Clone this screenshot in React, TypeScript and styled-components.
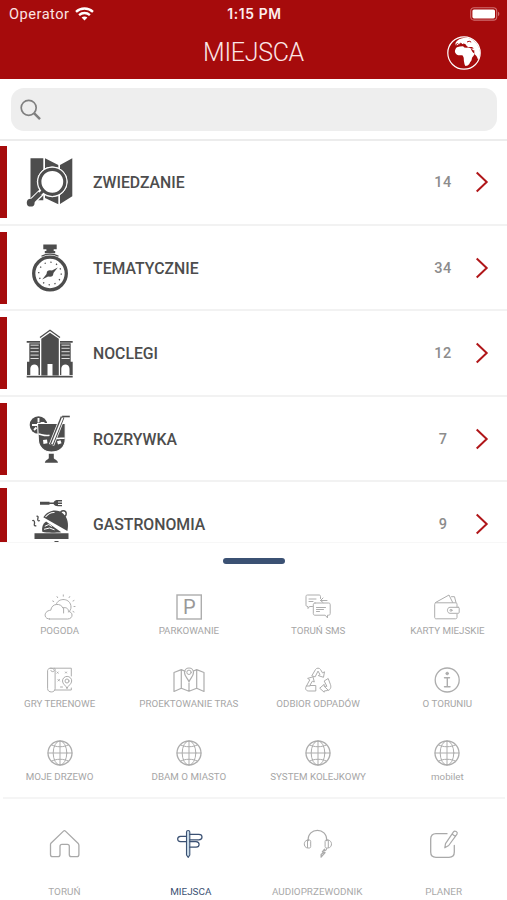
import React from "react";
import styled, { createGlobalStyle } from "styled-components";

const RED = "#a60b0c";
const DARK = "#4d4d4d";
const NAVY = "#3b5173";

const GlobalStyle = createGlobalStyle`
  *, *::before, *::after { box-sizing: border-box; }
  body { margin: 0; background: #fff; font-family: Roboto, "Liberation Sans", sans-serif; }
  svg { display: block; flex: none; }
`;

const Screen = styled.main`
  width: 507px;
  height: 900px;
  display: flex;
  flex-direction: column;
  overflow: hidden;
  background: #fff;
`;

const Header = styled.header`
  height: 79px;
  flex: none;
  background: ${RED};
  color: #fff;
`;

const StatusBar = styled.div`
  height: 27px;
  padding: 0 7px 0 9px;
  display: grid;
  grid-template-columns: 1fr auto 1fr;
  align-items: center;
`;

const Carrier = styled.div`
  display: flex;
  align-items: center;
  gap: 6px;
  padding-top: 1px;
  font-size: 14.6px;
  line-height: 26px;
  letter-spacing: 0.5px;
  color: #fbe3e3;
`;

const Clock = styled.div`
  padding-top: 1px;
  font-family: Inter, Roboto, sans-serif;
  font-weight: 600;
  font-size: 13.8px;
  line-height: 26px;
  letter-spacing: 0.65px;
  color: #fdeeee;
`;

const BatterySlot = styled.div`
  display: flex;
  justify-content: flex-end;
`;

const TitleBar = styled.div`
  height: 52px;
  padding: 0 26px 0 60px;
  display: grid;
  grid-template-columns: 1fr 34px;
  align-items: center;
`;

const Title = styled.h1`
  margin: 0;
  text-align: center;
  font-size: 25px;
  line-height: 50px;
  font-weight: 300;
  letter-spacing: -0.3px;
  color: #fbe6e6;
`;

const SearchArea = styled.div`
  height: 62px;
  flex: none;
  padding: 9px 10px 0 11px;
  border-bottom: 2px solid #ececec;
`;

const SearchField = styled.div`
  height: 43px;
  padding-left: 9px;
  border-radius: 13px;
  background: #eeeeee;
  display: flex;
  align-items: center;
`;

const List = styled.ul`
  height: 401px;
  flex: none;
  margin: 0;
  padding: 0;
  overflow: hidden;
  list-style: none;
`;

const Row = styled.li`
  height: 85.5px;
  padding: 1px 18px 0 0;
  border-bottom: 2px solid #f2f2f2;
  display: flex;
  align-items: center;

  &:first-child {
    height: 84.5px;
    padding-top: 0;
  }
`;

const Accent = styled.span`
  width: 7px;
  height: 72px;
  margin-right: 17px;
  background: ${RED};
`;

const RowLabel = styled.span`
  flex: 1;
  margin-left: 17px;
  padding-top: 1px;
  font-size: 15.8px;
  font-weight: 500;
  color: ${DARK};
`;

const Count = styled.span`
  width: 60px;
  margin-right: 2px;
  padding-top: 1px;
  text-align: center;
  font-size: 14.5px;
  font-weight: 500;
  letter-spacing: 0.4px;
  color: #8c8c8c;
`;

const Drawer = styled.section`
  height: 255px;
  flex: none;
  padding-top: 15px;
  border-top: 1px solid #f7f7f7;
`;

const Handle = styled.div`
  width: 62px;
  height: 5.5px;
  margin: 0 auto 27px;
  border-radius: 3px;
  background: ${NAVY};
`;

const Grid = styled.div`
  margin: 0 -5px;
  display: grid;
  grid-template-columns: repeat(4, 1fr);
  grid-auto-rows: 73.3px;
`;

const Tile = styled.div`
  display: flex;
  flex-direction: column;
  align-items: center;
  color: #adadad;
`;

const TileLabel = styled.span`
  margin-top: 1px;
  font-size: 9.75px;
  line-height: 14px;
  white-space: nowrap;
  color: #a6a6a6;
`;

const TabBar = styled.nav`
  flex: 1;
  margin: 0 2px 0 3px;
  border-top: 2px solid #f5f5f5;
  display: grid;
  grid-template-columns: repeat(4, 126.4px);
  justify-content: center;
`;

const Tab = styled.div<{ $active?: boolean }>`
  padding-top: 29px;
  display: flex;
  flex-direction: column;
  align-items: center;
  color: ${(p) => (p.$active ? NAVY : "#a9a9a9")};
`;

const TabLabel = styled.span`
  margin-top: 25px;
  font-size: 9.9px;
  line-height: 14px;
  white-space: nowrap;
`;

const LineSvg = ({ children }: { children: React.ReactNode }) => (
  <svg width="40" height="32" viewBox="0 0 40 32" fill="none" stroke="currentColor" strokeWidth="1" strokeLinejoin="round" strokeLinecap="round">
    {children}
  </svg>
);

const SolidSvg = ({ children }: { children: React.ReactNode }) => (
  <svg width="52" height="52" viewBox="0 0 52 52" fill={DARK}>
    {children}
  </svg>
);

const Wifi = () => (
  <svg width="19" height="14" viewBox="0 0 19 14" fill="none" stroke="#fff" strokeWidth="2.4">
    <path d="M1 4.8C5.8.4 13.2.4 18 4.8" />
    <path d="M4.1 8.1c3.1-2.8 7.7-2.8 10.8 0" />
    <path d="M9.5 13.6 6.6 10.6c1.7-1.5 4.1-1.5 5.8 0z" fill="#fff" stroke="none" />
  </svg>
);

const Battery = () => (
  <svg width="30" height="14" viewBox="0 0 30 14">
    <rect x=".7" y=".7" width="26" height="12.4" rx="3.4" fill="none" stroke="#d06f70" strokeWidth="1.1" />
    <rect x="2.4" y="2.4" width="22.6" height="9" rx="1.6" fill="#fff" />
    <path d="M28 4.8c1.8.5 1.8 3.7 0 4.2z" fill="#d06f70" />
  </svg>
);

const Earth = () => (
  <svg width="34" height="34" viewBox="0 0 34 34">
    <circle cx="17" cy="17" r="16.2" fill="none" stroke="#fff" strokeWidth="1.2" />
    <path
      fill="#fff"
      d="M8.5 9.2C8 7 9 5.500 10.500 4.400 14 1.600 20.500 .6 25 3.400c4.500 2.700 8 8 8 13.200 0 3.100-.6 5.200-1.700 7.200-.7-.8-.9-2.200-1.600-3.300-.6-1.200-1.500-1.300-2-2.400l-.9-3.500c-.8-1-2.400-.9-3.200-2l1.500-.2 1.300.4c.4-1.500-1.400-2-3.200-1.900l-2.200.2-1.700-1.500-1-1.700-2.300.3-2.600-.6-1.600 1.300z"
    />
    <path
      fill="#fff"
      d="M10 11.300c2-.6 4-1.100 6.100-1l1.200 1.100 2 .3 1.900-.3 2.800.8 1 2.500c.6 1.200 1.200 2.300 2.500 2.500.6.8-1 2.700-2.200 4.100-.7 1.300-.3 2.300-1 3.400-.9.8-1.600 1.900-2 3.200-1 1.300-2.100 2-3.900 2-1.100-1.600-1.100-3.200-1.500-4.900l-.2-3.300-1-2.200c-1.700-.5-4 .2-5.700-.7-1.100-1-1.900-1.900-2.100-3.200.1-1.700.7-3.300 2.100-4.300z"
    />
    <path d="m8.500 8.900 2-1.300 1.400 1 1.900-1.400 1.800 1.600 1.500-1 1.200 2.200M20 6l2.200-.8 2 .9" fill="none" stroke={RED} strokeWidth="1" />
    <path d="m24 12.300 1.700 3.200 1.900-.5" fill="none" stroke={RED} strokeWidth=".8" />
  </svg>
);

const SearchIcon = () => (
  <svg width="22" height="22" viewBox="0 0 22 22" fill="none" stroke="#808080">
    <circle cx="8.700" cy="8.800" r="7.500" strokeWidth="1.700" />
    <path d="m14 14.200 6 6" strokeWidth="2.400" />
  </svg>
);

const Chevron = () => (
  <svg width="14" height="22" viewBox="0 0 14 22" fill="none" stroke="#b01619" strokeWidth="2">
    <path d="m1.700 1.500 10 9.500-10 9.500" />
  </svg>
);

const SightseeingIcon = () => (
  <SolidSvg>
    <path d="M6.500 2.300h12.800v42H6.500zM21 2.300 34.300 9v39.300L21 42zM36 9l12.300-6.700v38L36 48z" />
    <path d="M19.500 34.500 6.700 46.700" stroke="#fff" strokeWidth="7" strokeLinecap="round" />
    <circle cx="28.300" cy="25.800" r="15" fill="#fff" stroke="#fff" strokeWidth="1" />
    <circle cx="28.300" cy="25.800" r="12.500" fill="#fff" stroke={DARK} strokeWidth="3.200" />
    <path d="m20 34-4 4" stroke={DARK} strokeWidth="3" />
    <path d="M16 37.500 6.700 46.700" stroke={DARK} strokeWidth="4.600" />
    <circle cx="6.700" cy="46.700" r="3.900" />
  </SolidSvg>
);

const StopwatchIcon = () => (
  <SolidSvg>
    <path d="M19.300 2.600h13.400v4.700h-3v1.800h1.500v2.200H20.800V9.100h1.600V7.300h-3.100z" />
    <path d="M17.500 14.200c5-2.700 12-2.700 17 0" fill="none" stroke={DARK} strokeWidth="1.300" />
    <circle cx="26" cy="31.500" r="16.300" fill="#fff" stroke={DARK} strokeWidth="3.300" />
    <circle cx="26" cy="31.500" r="11.300" fill="none" stroke={DARK} strokeWidth="1.300" strokeDasharray="1.300 4.617" />
    <circle cx="26" cy="31.500" r="3.300" />
    <path d="m27 29 6.800-3.500-4.800 6zM25 34l-6.800 3.500 4.800-6z" />
  </SolidSvg>
);

const HotelIcon = () => (
  <SolidSvg>
    <path d="M16 10.600 26 3.200l10 7.400" fill="none" stroke={DARK} strokeWidth="1.300" />
    <path d="M17.300 11.800 26 5.800l8.800 6v36.800h-6.300V37h-5v11.600h-6.200z" />
    <path d="M2.700 14H16v1.700H2.700zM36 14h12.700v1.700H36zM2.700 48.700h46v1.700h-46z" />
    <path d="M5.300 16.300H16v31.500H5.300zM36 16.300h10.700v31.500H36z" />
    <path d="M6.500 18.200h8.200M6.500 21.300h8.200M6.500 24.700h8.200M6.500 28.100h8.200M6.500 31.500h8.200M37.500 18.200h8.200M37.500 21.300h8.200M37.500 24.700h8.200M37.500 28.100h8.200M37.500 31.500h8.200" stroke="#ddd" strokeWidth="1" />
    <path d="M3 48V34.800h13V48M36 48V34.800h12.700V48" />
    <path d="M6.300 48.200v-6.500c0-5.700 8.200-5.700 8.200 0v6.500zM37.300 48.200v-6.500c0-5.700 8.200-5.700 8.200 0v6.500z" fill="#fff" />
    <path d="M16.500 12v36.200M35.500 12v36.200" stroke="#fff" strokeWidth=".9" />
  </SolidSvg>
);

const DrinkIcon = () => (
  <SolidSvg>
    <circle cx="14.500" cy="12" r="8.800" />
    <path d="M14.500 5v4.500M8 12h5M10 17l2.500-2.500M16.500 10h4" stroke="#fff" strokeWidth="1.900" />
    <path d="M13.500 10.500h27.700v16.200c0 7.200-5.700 12.300-13.800 12.300-7.200 0-13-5-13-12.300z" stroke="#fff" strokeWidth="1.100" />
    <path d="M14.500 20.900c4 .8 6.500 2.500 11 1.300M29.500 24.500c4 1.900 7 .4 11.200.7" stroke="#fff" strokeWidth="1.500" fill="none" />
    <path d="m19 27 4-.5.500 3.800-4 .6zM33 28.200l3.500-1 1 3-3.500 1.200z" fill="#fff" />
    <path d="M38.600 4 27.500 32" stroke="#fff" strokeWidth="5.400" />
    <path d="M38.600 4 27.500 32" stroke={DARK} strokeWidth="3.800" />
    <path d="M38.700 4.500 27.900 31.300" stroke="#fff" strokeWidth="1.600" />
    <path d="M45.800 3.500h-7.700" stroke={DARK} strokeWidth="1.600" />
    <path d="M24.800 40.800h5v4.400c1 1.400 3.700 1.800 4.200 4.500H20.800c.5-2.700 3-3.100 4-4.500z" />
  </SolidSvg>
);

const FoodIcon = () => (
  <SolidSvg>
    <path d="M16 3.700h9.500v.8h4c1-1.900 2.400-2.400 4.400-2.400H38v1.300h-4v1h4v1.500h-4v1h4v1.300h-4.100c-2 0-3.400-.4-4.400-2.200h-4v.8H16z" />
    <circle cx="39.300" cy="15.700" r="2.900" fill="none" stroke={DARK} strokeWidth="1.400" />
    <path d="M19.300 19.300c5-7.700 14.500-8.700 20-3.500 4.600 4.300 5.500 10.500 4.100 17.300z" />
    <path d="M21.500 19c3-3.600 6.300-4.700 9-4.500" fill="none" stroke="#fff" strokeWidth="1.100" />
    <path d="M18.300 33.800c-.7-3.900.2-7.800 3.800-10.300l15.200 10.700c-5 .5-14 .9-19-.4z" />
    <path d="m20.800 28.300 4-1.800 3 2M20 31.300l5.500-1.300 5 1.800" fill="none" stroke="#fff" strokeWidth="1" />
    <path d="M8.300 22.700c2-1.300 2.700 2 2 3.600-.3 1.500.8 1.700 2 1.300M12.500 18.300c2.300-.5 1.500 1.700 1.200 2.900 0 1.700.9 2 2.200 1.300" fill="none" stroke={DARK} strokeWidth="1.300" />
    <path d="M10.500 35.200h34V41h-34zM30.500 43h4v3h-4z" />
  </SolidSvg>
);

const WeatherIcon = () => (
  <LineSvg>
    <path d="M9.500 28h18c5.800 0 6-7 .9-7.600.3-3-3-4.600-5.600-3.400-1.500-5-11.200-5.200-12 2.200-7.200.5-7.600 8.800-1.300 8.800z" />
    <path d="M16.300 13.300c1.700-7 14.500-6.600 14.700 2.700 0 2.200-.9 3.700-2.300 5.100M23.600 17v5" />
    <path d="M23.300 3.900v1.300M17 5.600l.6 1M29.700 5.600l-.6 1M33 10l1-.5M34 15.500h1M33 20.500l1 .5M12.700 10l1 .5" />
  </LineSvg>
);

const ParkingIcon = () => (
  <LineSvg>
    <rect x="8" y="4" width="24.300" height="24" strokeWidth="1.400" strokeLinejoin="miter" />
    <text x="20.300" y="23" textAnchor="middle" fontFamily="Roboto, sans-serif" fontSize="20" fill="#999" stroke="none">P</text>
  </LineSvg>
);

const SmsIcon = () => (
  <LineSvg>
    <path d="M14.500 15.500h-3l-1.500 2v-2c-1.500 0-2-.5-2-1.700V5.500C8 4.400 8.500 4 9.500 4H21c1 0 1.500.5 1.500 1.500v2" />
    <path d="M17 12h13.500c1.200 0 1.700.6 1.700 1.700v8.800c0 1.200-.6 1.700-1.700 1.700h-1v2.700l-2.300-2.700H17c-1.200 0-1.700-.6-1.700-1.700v-8.800c0-1.100.6-1.700 1.700-1.700z" />
    <path d="M11 8h7M11 10.500h4M18.500 16.500h9M18.500 18.500h7M18.500 20.500h3M29 9.500h-6.500M25 7l-2.500 2.500L25 11.500" />
  </LineSvg>
);

const WalletIcon = () => (
  <LineSvg>
    <path d="M30 16v-2.600c0-1-.5-1.600-1.500-1.600H9.200c-1 0-1.500.6-1.500 1.500v13c0 1 .5 1.500 1.500 1.500h19.300c1 0 1.500-.5 1.500-1.500v-2.900" />
    <path d="M31.300 16.300H23c-3.400 0-3.400 6 0 6h8.300c.6 0 .9-.3.900-.9v-4.200c0-.6-.3-.9-.9-.9zM8.500 11.500 22 4l3.700 7.500M24.500 5.700h3l1.500 6" />
    <circle cx="24" cy="19.300" r="1" />
  </LineSvg>
);

const GamesIcon = () => (
  <LineSvg>
    <path d="M14.300 4.200c1 0 1 1 .8 2v18.500c0 4.300-7.500 4.300-7.500 0V6.500c0-3 6.700-3 6.700 0 0 1.700-3.500 1.500-3.500 0M10 4.200h21.300V12M15 26h16.300v-2" />
    <path d="M27 24.300c-1-3-4.500-4-4.500-7.300a4.600 4.600 0 0 1 9.200 0c0 3.300-3.700 4.300-4.700 7.300z" />
    <circle cx="27" cy="17" r="2" />
    <path d="m17 8 1.200 1.200M18.200 8 17 9.200M25.500 8l1 1M26.500 8l-1 1M18 15.500l1.500 1.500M19.500 15.500 18 17M20.500 23h2" />
  </LineSvg>
);

const RouteIcon = () => (
  <LineSvg>
    <path d="M16 7.300 12.300 5.600 5 8.500v19l7.300-3.200 7.700 3 7.700-3 7.300 3.200v-19l-7.300-2.900L24.500 7M12.300 5.600v18.700M27.700 5.600v18.700M20 19v8" strokeWidth="1.200" />
    <path d="M20 17.800c-1.300-3.500-4.500-5.300-4.500-9.300a4.500 4.500 0 0 1 9 0c0 4-3.200 5.800-4.500 9.300z" strokeWidth="1.200" />
    <circle cx="20" cy="8.300" r="2.200" />
  </LineSvg>
);

const RecycleIcon = () => (
  <LineSvg>
    <path d="m14 11.500 3.500-6c1-1.800 4-1.800 5 0l2 3.400 2-1.100-1 5.500-5.200-1.700 1.700-1-2-3.500-2.700 5.400z" />
    <path d="m10 14.300 5-1.500 1.300 5.200-2-.8-2.500 4.300h6V27h-7c-2.600 0-4-2-2.700-4.300l3.500-6.500zM8.300 22h3.500" />
    <path d="m26.500 16.800 3.700-2.300 2.300 6.200c1 3-.4 5.500-3 5.800l-3.300.5v1.200l-4.500-4 4.500-3.900v2h2.300zM26.200 22.300l4 3.900" />
  </LineSvg>
);

const InfoIcon = () => (
  <LineSvg>
    <circle cx="20.200" cy="16" r="12" strokeWidth="1.300" />
    <circle cx="20.200" cy="9.500" r="1.300" fill="currentColor" />
    <path d="M17.500 13.700h5M20.300 13.700v9M17.500 22.700h5.500" strokeWidth="1.400" />
  </LineSvg>
);

const GlobeIcon = () => (
  <LineSvg>
    <circle cx="20" cy="16" r="12" strokeWidth="1.300" />
    <ellipse cx="20" cy="16" rx="6.800" ry="12" />
    <path d="M20 4v24M8 16h24M11.500 7.900c4.500 2.500 12.500 2.500 17 0M11.500 24.100c4.500-2.500 12.500-2.500 17 0" />
  </LineSvg>
);

const HomeIcon = () => (
  <LineSvg>
    <path d="M6.900 15.200 19.500 3.100c.6-.6 1.300-.6 1.900 0L34 15.200c.6.6.9 1.300.9 2.200v9.100c0 1.500-.8 2.200-2.200 2.200h-5.200c-1.400 0-2.200-.7-2.200-2.200v-8.200c0-1.300-.7-2-2-2h-5.300c-1.300 0-2 .7-2 2v8.200c0 1.500-.8 2.200-2.200 2.200H8.700c-1.500 0-2.200-.7-2.200-2.200v-9.100c0-.9-.2-1.600.4-2.200z" strokeWidth="1.300" />
  </LineSvg>
);

const SignpostIcon = () => (
  <LineSvg>
    <path d="M15.500 27V4c0-2 3.300-2 3.300 0v23l-1.600 2.400z" fill="#cbdce9" strokeWidth="1.100" />
    <path d="M18.800 6.300h9c4.300 0 4.300 5.500 0 5.500h-9M15.500 8.300h-6c-3.800.5-3.800 4.900 0 5.400h6M18.800 13.700h6.300c4 .3 4 5.200 0 5.500h-6.300" strokeWidth="1.200" />
  </LineSvg>
);

const HeadphonesIcon = () => (
  <LineSvg>
    <path d="M11.200 12.500c-.8-13.600 19.200-13.600 18.400 0" strokeWidth="1.300" />
    <path d="M11 12h1.200c1 0 1.500.5 1.500 1.500v5c0 1-.5 1.500-1.500 1.500H11c-5 0-5-8 0-8zM30.800 12h-1.200c-1 0-1.500.5-1.500 1.500v5c0 1 .5 1.500 1.500 1.500h1.200c5 0 5-8 0-8zM10.500 12.500v7M31.300 12.500v7" />
    <path d="M29.700 20.500c-.2 1.400-.8 2-2 2.300l-.2-1.700-2.200 2.800 1.500.3-2.700 2.300v2.700l4-4.500-1.400-.2" strokeWidth="1.200" />
  </LineSvg>
);

const PlannerIcon = () => (
  <LineSvg>
    <path d="M23 5.700H12c-3.400 0-5.300 1.900-5.300 5.300v13c0 3.400 1.900 5.300 5.300 5.300h13c3.400 0 5.300-1.900 5.300-5.300v-6.500" strokeWidth="1.300" />
    <path d="m20.800 19.800.7-4.200 8-11.800c1.300-1.800 4.700.3 3.500 2.400l-8.300 11.300zM28 6l3.500 2.400" strokeWidth="1.200" />
  </LineSvg>
);

const categories = [
  { label: "ZWIEDZANIE", count: 14, Icon: SightseeingIcon },
  { label: "TEMATYCZNIE", count: 34, Icon: StopwatchIcon },
  { label: "NOCLEGI", count: 12, Icon: HotelIcon },
  { label: "ROZRYWKA", count: 7, Icon: DrinkIcon },
  { label: "GASTRONOMIA", count: 9, Icon: FoodIcon },
];

const services = [
  { label: "POGODA", Icon: WeatherIcon },
  { label: "PARKOWANIE", Icon: ParkingIcon },
  { label: "TORUŃ SMS", Icon: SmsIcon },
  { label: "KARTY MIEJSKIE", Icon: WalletIcon },
  { label: "GRY TERENOWE", Icon: GamesIcon },
  { label: "PROEKTOWANIE TRAS", Icon: RouteIcon },
  { label: "ODBIOR ODPADÓW", Icon: RecycleIcon },
  { label: "O TORUNIU", Icon: InfoIcon },
  { label: "MOJE DRZEWO", Icon: GlobeIcon },
  { label: "DBAM O MIASTO", Icon: GlobeIcon },
  { label: "SYSTEM KOLEJKOWY", Icon: GlobeIcon },
  { label: "mobilet", Icon: GlobeIcon },
];

const tabs = [
  { label: "TORUŃ", Icon: HomeIcon },
  { label: "MIEJSCA", Icon: SignpostIcon, active: true },
  { label: "AUDIOPRZEWODNIK", Icon: HeadphonesIcon },
  { label: "PLANER", Icon: PlannerIcon },
];

export default function App() {
  return (
    <Screen>
      <GlobalStyle />
      <Header>
        <StatusBar>
          <Carrier>
            Operator
            <Wifi />
          </Carrier>
          <Clock>1:15 PM</Clock>
          <BatterySlot>
            <Battery />
          </BatterySlot>
        </StatusBar>
        <TitleBar>
          <Title>MIEJSCA</Title>
          <Earth />
        </TitleBar>
      </Header>
      <SearchArea>
        <SearchField>
          <SearchIcon />
        </SearchField>
      </SearchArea>
      <List>
        {categories.map(({ label, count, Icon }) => (
          <Row key={label}>
            <Accent />
            <Icon />
            <RowLabel>{label}</RowLabel>
            <Count>{count}</Count>
            <Chevron />
          </Row>
        ))}
      </List>
      <Drawer>
        <Handle />
        <Grid>
          {services.map(({ label, Icon }) => (
            <Tile key={label}>
              <Icon />
              <TileLabel>{label}</TileLabel>
            </Tile>
          ))}
        </Grid>
      </Drawer>
      <TabBar>
        {tabs.map(({ label, Icon, active }) => (
          <Tab key={label} $active={active}>
            <Icon />
            <TabLabel>{label}</TabLabel>
          </Tab>
        ))}
      </TabBar>
    </Screen>
  );
}
